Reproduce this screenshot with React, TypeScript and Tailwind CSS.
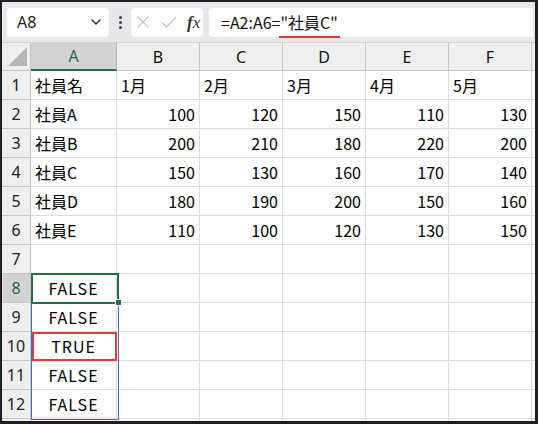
import React from "react";

const cols = ["A", "B", "C", "D", "E", "F", "G"];
const widths = ["w-[86px]", "w-[83px]", "w-[83px]", "w-[83px]", "w-[83px]", "w-[83px]", "w-[40px]"];

type Cell = { v: string; align: "l" | "r" | "c" };

const data: Cell[][] = [
  [{ v: "社員名", align: "l" }, { v: "1月", align: "l" }, { v: "2月", align: "l" }, { v: "3月", align: "l" }, { v: "4月", align: "l" }, { v: "5月", align: "l" }],
  [{ v: "社員A", align: "l" }, { v: "100", align: "r" }, { v: "120", align: "r" }, { v: "150", align: "r" }, { v: "110", align: "r" }, { v: "130", align: "r" }],
  [{ v: "社員B", align: "l" }, { v: "200", align: "r" }, { v: "210", align: "r" }, { v: "180", align: "r" }, { v: "220", align: "r" }, { v: "200", align: "r" }],
  [{ v: "社員C", align: "l" }, { v: "150", align: "r" }, { v: "130", align: "r" }, { v: "160", align: "r" }, { v: "170", align: "r" }, { v: "140", align: "r" }],
  [{ v: "社員D", align: "l" }, { v: "180", align: "r" }, { v: "190", align: "r" }, { v: "200", align: "r" }, { v: "150", align: "r" }, { v: "160", align: "r" }],
  [{ v: "社員E", align: "l" }, { v: "110", align: "r" }, { v: "100", align: "r" }, { v: "120", align: "r" }, { v: "130", align: "r" }, { v: "150", align: "r" }],
  [],
  [{ v: "FALSE", align: "c" }],
  [{ v: "FALSE", align: "c" }],
  [{ v: "TRUE", align: "c" }],
  [{ v: "FALSE", align: "c" }],
  [{ v: "FALSE", align: "c" }],
  [],
];

const cellFont = { fontFamily: '"Noto Sans CJK JP", "Noto Sans", sans-serif' };

export default function App() {
  return (
    <div className="w-[538px] h-[424px] bg-[#1f1f1f] pt-[2px] pl-[2px] pr-[3px] pb-[3px]">
      <div className="w-full h-full bg-white overflow-hidden flex flex-col">
        {/* Toolbar */}
        <div className="h-[41px] shrink-0 bg-[#e8e8ec] border-b border-[#d4d4d8] flex items-center pl-[5px]">
          <div className="w-[102px] h-[29px] bg-white rounded-[4px] flex items-center justify-between pl-[10px] pr-[7px]">
            <span className="text-[16px] text-[#222]" style={{ fontFamily: '"Noto Sans", sans-serif' }}>A8</span>
            <svg width="12" height="8" viewBox="0 0 12 8">
              <path d="M1.5 1.5 L6 6 L10.5 1.5" fill="none" stroke="#333" strokeWidth="1.5" />
            </svg>
          </div>
          <div className="w-[22px] flex flex-col items-center justify-center gap-[2px]">
            <div className="w-[3px] h-[3px] bg-[#444] rounded-full" />
            <div className="w-[3px] h-[3px] bg-[#444] rounded-full" />
            <div className="w-[3px] h-[3px] bg-[#444] rounded-full" />
          </div>
          <div className="w-[72px] h-[29px] bg-white rounded-[4px] flex items-center pl-[5px]">
            <svg width="14" height="14" viewBox="0 0 14 14" className="mr-[11px]">
              <path d="M1.5 1.5 L12.5 12.5 M12.5 1.5 L1.5 12.5" stroke="#c4c4c4" strokeWidth="1.3" />
            </svg>
            <svg width="16" height="14" viewBox="0 0 16 14" className="mr-[10px]">
              <path d="M1 7.5 L5.5 12 L15 2" fill="none" stroke="#c4c4c4" strokeWidth="1.3" />
            </svg>
            <span className="text-[17px] italic text-[#333] leading-none" style={{ fontFamily: '"Liberation Serif", serif' }}>
              <span className="font-bold">f</span>x
            </span>
          </div>
          <div className="w-[324px] h-[29px] bg-white rounded-l-[4px] ml-[6px] flex items-center pl-[12px]">
            <span className="text-[16px] text-[#111] relative" style={cellFont}>
              =A2:A6=<span className="relative">"社員C"
                <span className="absolute left-[-1px] right-[-2px] bottom-[-4px] h-[2px] bg-[#e03a3a]" />
              </span>
            </span>
          </div>
        </div>

        {/* Grid */}
        <div className="relative flex-1">
          {/* Header row */}
          <div className="flex h-[28px]">
            <div className="w-[29px] shrink-0 bg-[#efefef] border-r border-b border-[#c6c6c6] relative">
              <svg width="20" height="20" viewBox="0 0 20 20" className="absolute right-[2px] bottom-[3px]">
                <path d="M19 0 L19 19 L0 19 Z" fill="#b8b8b8" />
              </svg>
            </div>
            {cols.map((c, i) => (
              <div
                key={c}
                className={`${widths[i]} shrink-0 flex items-center justify-center text-[16px] ${
                  c === "A"
                    ? "bg-[#d3d3d3] text-[#1d6b40] border-r border-[#b8b8b8] border-b-2 border-b-[#1e7145]"
                    : "bg-[#efefef] text-[#111] border-r border-b border-[#c6c6c6]"
                }`}
                style={{ fontFamily: '"Noto Sans", sans-serif' }}
              >
                {c === "G" ? "" : c}
              </div>
            ))}
          </div>

          {/* Rows */}
          {data.map((row, r) => (
            <div key={r} className="flex h-[29px]">
              <div
                className={`w-[29px] shrink-0 flex items-center justify-center text-[16px] border-r border-b border-[#c6c6c6] ${
                  r === 7 ? "bg-[#d3d3d3] text-[#1d6b40]" : "bg-[#efefef] text-[#222]"
                }`}
                style={{ fontFamily: '"Noto Sans", sans-serif' }}
              >
                {r < 12 ? r + 1 : ""}
              </div>
              {cols.map((c, i) => {
                const cell = row[i];
                return (
                  <div
                    key={c}
                    className={`${widths[i]} shrink-0 flex items-center border-r border-b border-[#dcdcdc] text-[16px] text-black ${
                      cell?.align === "r"
                        ? "justify-end pr-[4px]"
                        : cell?.align === "c"
                        ? "justify-center tracking-[1px]"
                        : "justify-start pl-[4px]"
                    }`}
                    style={cellFont}
                  >
                    {cell?.v}
                  </div>
                );
              })}
            </div>
          ))}

          {/* Selection range A8:A12 (blue) */}
          <div className="absolute left-[29px] top-[231px] w-[88px] h-[146px] border border-[#3b6fcb] pointer-events-none" />
          {/* Active cell A8 (green) */}
          <div className="absolute left-[29px] top-[230px] w-[88px] h-[31px] border-2 border-[#1e7145] pointer-events-none" />
          {/* Fill handle */}
          <div className="absolute left-[113px] top-[256px] w-[7px] h-[7px] bg-[#1e7145] border border-white pointer-events-none" />
          {/* Red highlight A10 */}
          <div className="absolute left-[30px] top-[289px] w-[85px] h-[29px] border-2 border-[#e33b3b] pointer-events-none" />
        </div>
      </div>
    </div>
  );
}
